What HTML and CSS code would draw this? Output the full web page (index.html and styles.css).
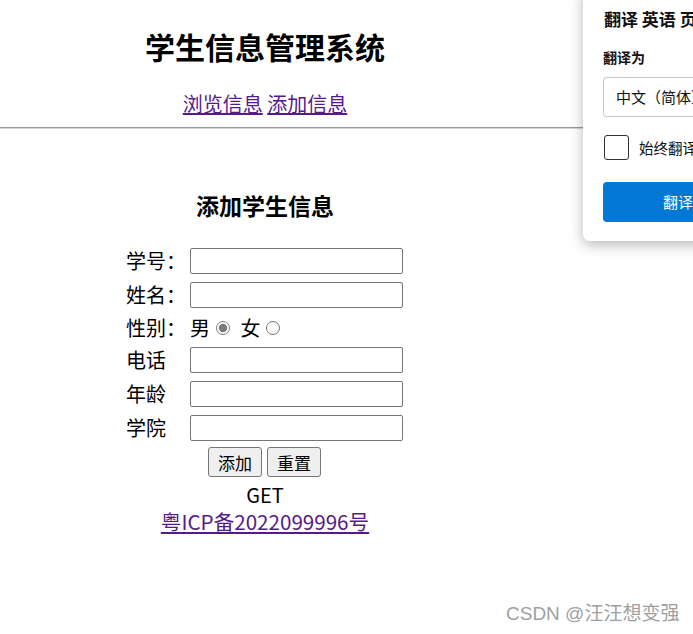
FILE: index.html
```html
<!DOCTYPE html>
<html lang="zh-CN">
<head>
<meta charset="utf-8">
<title>学生信息管理系统</title>
<link rel="stylesheet" href="styles.css">
</head>
<body>
<div class="page">
  <header class="top">
    <h1 class="title">学生信息管理系统</h1>
    <nav class="nav"><a href="#">浏览信息</a> <a href="#">添加信息</a></nav>
  </header>
  <div class="rule"></div>
  <main class="main">
    <h3 class="subtitle">添加学生信息</h3>
    <form class="form">
      <div class="row"><span class="label">学号：</span><input class="field" type="text"></div>
      <div class="row"><span class="label">姓名：</span><input class="field" type="text"></div>
      <div class="row short"><span class="label">性别：</span><span class="gender">男<input class="radio" type="radio" name="sex" checked> 女<input class="radio" type="radio" name="sex"></span></div>
      <div class="row"><span class="label">电话</span><input class="field" type="text"></div>
      <div class="row"><span class="label">年龄</span><input class="field" type="text"></div>
      <div class="row"><span class="label">学院</span><input class="field" type="text"></div>
      <div class="buttons"><button class="btn" type="button">添加</button><button class="btn" type="button">重置</button></div>
    </form>
    <p class="method">GET</p>
    <a class="icp" href="#">粤ICP备2022099996号</a>
  </main>
</div>

<div class="popup">
  <div class="popup-title">翻译 英语 页面</div>
  <div class="popup-label">翻译为</div>
  <div class="select">中文（简体）</div>
  <div class="check-row"><span class="checkbox"></span><span class="check-text">始终翻译英语页面</span></div>
  <div class="translate-btn">翻译</div>
</div>

<div class="watermark">CSDN @汪汪想变强</div>
</body>
</html>
```

FILE: styles.css
```css
html, body {
  margin: 0;
  padding: 0;
  background: #ffffff;
}
body {
  width: 693px;
  height: 634px;
  overflow: hidden;
  position: relative;
  font-family: "Noto Sans CJK SC", "Noto Sans", sans-serif;
  color: #000;
}
.page {
  width: 100%;
}
.top, .main {
  width: 530px;
  text-align: center;
}
.title {
  margin: 28px 0 0;
  font-size: 30px;
  line-height: 36px;
  font-weight: 700;
}
.nav {
  margin-top: 27px;
  font-size: 20px;
  line-height: 26px;
}
.nav a, .icp {
  color: #551a8b;
  text-decoration: underline;
}
.rule {
  margin-top: 10px;
  height: 1px;
  border-bottom: 1px solid #d6d6d6;
  background: #9a9a9a;
  width: 693px;
}
.subtitle {
  margin: 61px 0 0;
  font-size: 23px;
  line-height: 30px;
  font-weight: 700;
}
.form {
  margin-top: 24px;
  display: flex;
  flex-direction: column;
  align-items: flex-start;
  padding-left: 126px;
  text-align: left;
}
.row {
  height: 34px;
  display: flex;
  align-items: center;
  font-size: 20px;
}
.row.short {
  height: 31px;
}
.label {
  width: 64px;
  line-height: 26px;
}
.field {
  box-sizing: border-box;
  width: 213px;
  height: 26px;
  margin: 0;
  border: 1px solid #767676;
  border-radius: 2px;
  padding: 0 4px;
  background: #fff;
}
.gender {
  display: flex;
  align-items: center;
  line-height: 26px;
  white-space: pre;
}
.radio {
  width: 14px;
  height: 14px;
  margin: 0 6px 0 6px;
  accent-color: #7a7a7a;
}
.buttons {
  margin-top: 2px;
  margin-left: 82px;
  display: flex;
  gap: 5px;
}
.btn {
  box-sizing: border-box;
  width: 54px;
  height: 30px;
  padding: 0;
  font-family: "Noto Sans CJK SC", sans-serif;
  font-size: 17px;
  color: #000;
  background: #efefef;
  border: 1px solid #767676;
  border-radius: 3px;
}
.method {
  margin: 6px 0 0;
  font-size: 20px;
  line-height: 24px;
}
.icp {
  display: inline-block;
  margin-top: 2px;
  font-size: 20.6px;
  line-height: 24px;
}

.popup {
  position: absolute;
  left: 583px;
  top: -12px;
  width: 200px;
  height: 253px;
  box-sizing: border-box;
  padding: 18px 0 0 21px;
  background: #fff;
  border-radius: 7px;
  box-shadow: 0 4px 14px rgba(0, 0, 0, 0.28);
}
.popup-title {
  font-size: 17px;
  font-weight: 700;
  line-height: 26px;
  white-space: nowrap;
  color: #111;
}
.popup-label {
  margin-top: 15px;
  margin-left: -1px;
  font-size: 14px;
  font-weight: 700;
  line-height: 20px;
  color: #111;
}
.select {
  margin-top: 10px;
  margin-left: -1px;
  box-sizing: border-box;
  height: 40px;
  border: 1px solid #c8c8c8;
  border-right: none;
  border-radius: 4px 0 0 4px;
  padding-left: 12px;
  font-size: 15px;
  line-height: 38px;
  white-space: nowrap;
  color: #111;
}
.check-row {
  margin-top: 18px;
  display: flex;
  align-items: center;
  gap: 10px;
  height: 25px;
}
.checkbox {
  box-sizing: border-box;
  width: 25px;
  height: 25px;
  border: 1.5px solid #333;
  border-radius: 3px;
}
.check-text {
  font-size: 14.5px;
  white-space: nowrap;
  color: #111;
}
.translate-btn {
  margin-top: 22px;
  margin-left: -1px;
  height: 40px;
  background: #0078d4;
  color: #fff;
  border-radius: 4px 0 0 4px;
  font-size: 15px;
  line-height: 40px;
  padding-left: 60px;
  white-space: nowrap;
}
.watermark {
  position: absolute;
  left: 506px;
  top: 601px;
  font-size: 19px;
  line-height: 26px;
  color: #a0a0a0;
  font-family: "Liberation Sans", "Noto Sans CJK SC", sans-serif;
  white-space: nowrap;
}
```
